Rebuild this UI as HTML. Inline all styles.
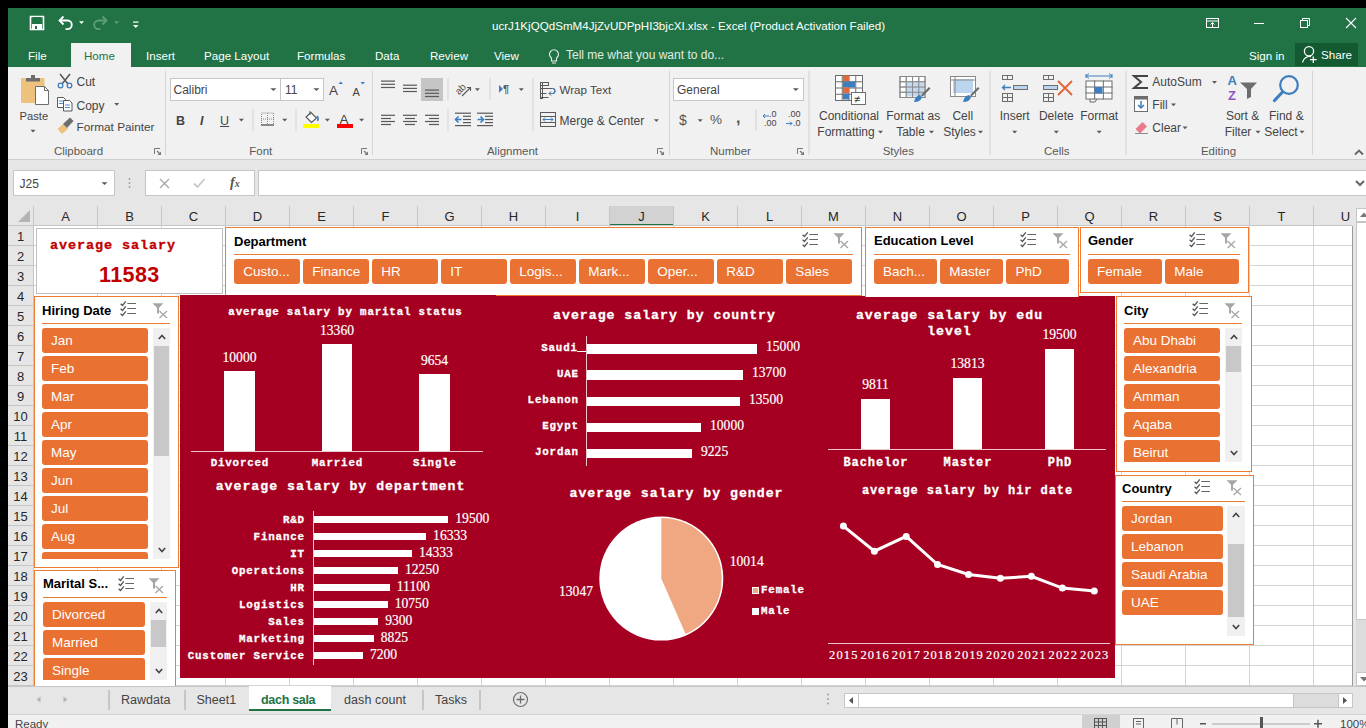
<!DOCTYPE html>
<html><head><meta charset="utf-8">
<style>
*{box-sizing:border-box;margin:0;padding:0}
html,body{width:1366px;height:728px;overflow:hidden;background:#000}
body{position:relative;font-family:"Liberation Sans",sans-serif;color:#262626}
.a{position:absolute}
.t{position:absolute;white-space:nowrap;line-height:1}
svg{position:absolute;overflow:visible}
#titlebar{left:8px;top:8px;width:1358px;height:59px;background:#217346}
#ribbon{left:8px;top:67px;width:1358px;height:93px;background:#f1f1f1;border-bottom:1px solid #cfcfcf}
#fbar{left:8px;top:160px;width:1358px;height:46px;background:#e6e6e6}
#colhdr{left:8px;top:206px;width:1358px;height:20px;background:#e6e6e6}
#rowhdr{left:8px;top:226px;width:25px;height:460px;background:#e6e6e6}
#grid{left:33px;top:226px;width:1320px;height:460px;background-color:#fff;
 background-image:linear-gradient(to right,#d4d4d4 1px,transparent 1px),linear-gradient(to bottom,transparent 19px,#d4d4d4 19px);
 background-size:64px 20px;background-position:0 0,0 0}
#tabbar{left:8px;top:686px;width:1358px;height:28px;background:#e6e6e6;border-top:1px solid #c6c6c6}
#status{left:8px;top:714px;width:1358px;height:14px;background:#f1f1f1;border-top:1px solid #d4d4d4}
.tab{position:absolute;top:43px;height:24px;line-height:25px;color:#fff;font-size:11.6px;white-space:nowrap}
.rt{position:absolute;white-space:nowrap;line-height:1;font-size:10.5px;color:#262626;letter-spacing:-0.15px}
.gl{position:absolute;top:144px;white-space:nowrap;line-height:1;font-size:10.5px;color:#595959;letter-spacing:-0.1px}
.sep{position:absolute;width:1px;background:#dadada}
.ch{position:absolute;top:206px;height:20px;font-size:13px;color:#262626;text-align:center;line-height:22px;border-right:1px solid #c6c6c6}
.rh{position:absolute;left:8px;width:25px;height:20px;font-size:13px;color:#262626;text-align:center;line-height:22px;border-bottom:1px solid #c6c6c6}
.dash{left:180px;top:296px;width:935px;height:382px;background:#a50021}
.mono{position:absolute;white-space:nowrap;line-height:1;font-family:"Liberation Mono",monospace;font-weight:bold;color:#fff;-webkit-text-stroke:0.3px #fff}
.serif{position:absolute;white-space:nowrap;line-height:1;font-family:"Liberation Serif",serif;color:#fff;-webkit-text-stroke:0.2px #fff}
.bar{position:absolute;background:#fff}
.slicer{position:absolute;background:#fff;border:1px solid #ed7d31}
.stitle{position:absolute;font-weight:bold;color:#000;white-space:nowrap;line-height:1}
.sdiv{position:absolute;height:1px;background:#ed7d31}
.btn{position:absolute;background:#e97132;border-radius:3px;color:#fff;font-size:13.5px;line-height:26px;padding-left:9px;white-space:nowrap;overflow:hidden;height:24px}
.sb{position:absolute;background:#f0f0f0}
.thumb{position:absolute;background:#c8c8c8}

</style></head><body>

<!-- chrome -->
<div id="titlebar" class="a"></div>
<div id="ribbon" class="a"></div>
<div id="fbar" class="a"></div>
<div id="colhdr" class="a"></div>
<div id="rowhdr" class="a"></div>
<div id="grid" class="a"></div>
<!-- title text -->
<div class="t" style="left:492px;top:20px;font-size:11.6px;color:#fff;letter-spacing:0px">ucrJ1KjQQdSmM4JjZvUDPpHI3bjcXI.xlsx - Excel (Product Activation Failed)</div>
<!-- tabs -->
<div class="a" style="left:71px;top:43px;width:60px;height:24px;background:#f1f1f1"></div>
<div class="tab" style="left:28px">File</div>
<div class="tab" style="left:84px;color:#217346">Home</div>
<div class="tab" style="left:146px">Insert</div>
<div class="tab" style="left:204px">Page Layout</div>
<div class="tab" style="left:297px">Formulas</div>
<div class="tab" style="left:375px">Data</div>
<div class="tab" style="left:430px">Review</div>
<div class="tab" style="left:494px">View</div>
<div class="tab" style="left:566px;color:#e0ece4;font-size:12px">Tell me what you want to do...</div>
<div class="tab" style="left:1249px">Sign in</div>
<div class="a" style="left:1295px;top:43px;width:63px;height:23px;background:#135a32"></div>
<div class="tab" style="left:1321px;top:42px">Share</div>

<!-- ribbon -->
<div class="t" style="left:19.5px;top:110.5px;font-size:11.2px;color:#444;">Paste</div>
<div class="t" style="left:76.5px;top:76px;font-size:12px;color:#444;">Cut</div>
<div class="t" style="left:76.5px;top:99.5px;font-size:12px;color:#444;">Copy</div>
<div class="t" style="left:76.5px;top:121.5px;font-size:11.8px;color:#444;">Format Painter</div>
<div class="t" style="left:-21.5px;width:200px;text-align:center;top:145.5px;font-size:11.5px;color:#595959;">Clipboard</div>
<div class="a" style="left:170px;top:78px;width:111px;height:23px;background:#fff;border:1px solid #c6c6c6"></div>
<div class="a" style="left:280px;top:78px;width:44px;height:23px;background:#fff;border:1px solid #c6c6c6"></div>
<div class="t" style="left:173.5px;top:83.5px;font-size:12px;color:#444;">Calibri</div>
<div class="t" style="left:285px;top:83.5px;font-size:12px;color:#444;">11</div>
<div class="t" style="left:329px;top:83.5px;font-size:13.5px;color:#444;">A</div>
<div class="t" style="left:352.5px;top:86.5px;font-size:11px;color:#444;">A</div>
<div class="t" style="left:176px;top:114.5px;font-size:12.5px;color:#444;font-weight:bold">B</div>
<div class="t" style="left:200px;top:114.5px;font-size:12.5px;color:#444;font-style:italic;font-weight:bold">I</div>
<div class="t" style="left:220px;top:114.5px;font-size:12.5px;color:#444;text-decoration:underline">U</div>
<div class="t" style="left:339.5px;top:112.5px;font-size:13.5px;color:#444;">A</div>
<div class="t" style="left:160.8px;width:200px;text-align:center;top:145.5px;font-size:11.5px;color:#595959;">Font</div>
<div class="t" style="left:503px;top:83.5px;font-size:11px;color:#595959;font-weight:bold">¶</div>
<div class="t" style="left:559.5px;top:84px;font-size:11.6px;color:#444;">Wrap Text</div>
<div class="t" style="left:559.5px;top:114.5px;font-size:12px;color:#444;">Merge &amp; Center</div>
<div class="t" style="left:412.5px;width:200px;text-align:center;top:145.5px;font-size:11.5px;color:#595959;">Alignment</div>
<div class="a" style="left:673px;top:78px;width:131px;height:23px;background:#fff;border:1px solid #c6c6c6"></div>
<div class="t" style="left:677px;top:83.5px;font-size:12px;color:#444;">General</div>
<div class="t" style="left:679px;top:113px;font-size:14px;color:#555;">$</div>
<div class="t" style="left:710px;top:113px;font-size:13.5px;color:#555;">%</div>
<div class="t" style="left:736px;top:110px;font-size:16px;color:#555;font-weight:bold">,</div>
<div class="t" style="left:769px;top:110px;font-size:9px;color:#444;">.0</div>
<div class="t" style="left:764px;top:119px;font-size:9px;color:#444;">.00</div>
<div class="t" style="left:788px;top:110px;font-size:9px;color:#444;">.00</div>
<div class="t" style="left:793px;top:119px;font-size:9px;color:#444;">.0</div>
<div class="t" style="left:630.5px;width:200px;text-align:center;top:145.5px;font-size:11.5px;color:#595959;">Number</div>
<div class="t" style="left:749px;width:200px;text-align:center;top:110px;font-size:12px;color:#444;">Conditional</div>
<div class="t" style="left:746px;width:200px;text-align:center;top:126px;font-size:12px;color:#444;">Formatting</div>
<div class="t" style="left:813.2px;width:200px;text-align:center;top:110px;font-size:12px;color:#444;">Format as</div>
<div class="t" style="left:810.5px;width:200px;text-align:center;top:126px;font-size:12px;color:#444;">Table</div>
<div class="t" style="left:862.8px;width:200px;text-align:center;top:110px;font-size:12px;color:#444;">Cell</div>
<div class="t" style="left:859.5px;width:200px;text-align:center;top:126px;font-size:12px;color:#444;">Styles</div>
<div class="t" style="left:798.3px;width:200px;text-align:center;top:145.5px;font-size:11.5px;color:#595959;">Styles</div>
<div class="t" style="left:914.7px;width:200px;text-align:center;top:110px;font-size:12px;color:#444;">Insert</div>
<div class="t" style="left:956.3px;width:200px;text-align:center;top:110px;font-size:12px;color:#444;">Delete</div>
<div class="t" style="left:999.2px;width:200px;text-align:center;top:110px;font-size:12px;color:#444;">Format</div>
<div class="t" style="left:956.8px;width:200px;text-align:center;top:145.5px;font-size:11.5px;color:#595959;">Cells</div>
<div class="t" style="left:1152.3px;top:76px;font-size:12px;color:#444;">AutoSum</div>
<div class="t" style="left:1152.3px;top:99px;font-size:12px;color:#444;">Fill</div>
<div class="t" style="left:1152.3px;top:122px;font-size:12px;color:#444;">Clear</div>
<div class="t" style="left:1227.5px;top:74px;font-size:13px;color:#3d7ebf;font-weight:bold">A</div>
<div class="t" style="left:1228px;top:88.5px;font-size:13px;color:#8e56c4;font-weight:bold">Z</div>
<div class="t" style="left:1142.6px;width:200px;text-align:center;top:110px;font-size:12px;color:#444;">Sort &amp;</div>
<div class="t" style="left:1138px;width:200px;text-align:center;top:126px;font-size:12px;color:#444;">Filter</div>
<div class="t" style="left:1186.3px;width:200px;text-align:center;top:110px;font-size:12px;color:#444;">Find &amp;</div>
<div class="t" style="left:1181px;width:200px;text-align:center;top:126px;font-size:12px;color:#444;">Select</div>
<div class="t" style="left:1118.5px;width:200px;text-align:center;top:145.5px;font-size:11.5px;color:#595959;">Editing</div>
<div class="a" style="left:13px;top:170px;width:102px;height:26px;background:#fff;border:1px solid #c6c6c6"></div>
<div class="t" style="left:19.5px;top:178px;font-size:12px;color:#444;">J25</div>
<div class="a" style="left:145px;top:170px;width:110px;height:26px;background:#fff;border:1px solid #c6c6c6"></div>
<div class="t" style="left:230px;top:176px;font-size:14px;color:#555;font-family:'Liberation Serif';font-weight:bold"><i>f</i><span style="font-size:10px"><i>x</i></span></div>
<div class="a" style="left:258px;top:170px;width:1108px;height:26px;background:#fff;border:1px solid #c6c6c6;border-right:none"></div>
<svg style="left:0;top:0" width="1366" height="728"><path d="M30.5,16.5 h13 v13 h-13 z" fill="none" stroke="#fff" stroke-width="1.6"/><rect x="33" y="17" width="8" height="6" fill="#217346"/><rect x="32" y="24" width="10" height="5" fill="#fff"/><rect x="35" y="26" width="2" height="3" fill="#217346"/><path d="M60,20.5 h7.5 a4.3,4.3 0 0 1 0,8.6 h-2" fill="none" stroke="#fff" stroke-width="1.8"/><polyline points="63.5,16.5 59.5,20.5 63.5,24.5" fill="none" stroke="#fff" stroke-width="1.8"/><polygon points="79.0,21.2 84.0,21.2 81.5,24.0" fill="#fff"/><path d="M106,20.5 h-7.5 a4.3,4.3 0 0 0 0,8.6 h2" fill="none" stroke="#5e9e7a" stroke-width="1.8"/><polyline points="102.5,16.5 106.5,20.5 102.5,24.5" fill="none" stroke="#5e9e7a" stroke-width="1.8"/><polygon points="114.0,21.2 119.0,21.2 116.5,24.0" fill="#5e9e7a"/><rect x="133" y="21.5" width="5.5" height="1.2" fill="#fff"/><polygon points="133,25 138.5,25 135.75,28" fill="#fff"/><rect x="1206.5" y="18.5" width="12" height="9" fill="none" stroke="#fff" stroke-width="1"/><line x1="1206" y1="21" x2="1219" y2="21" stroke="#fff"/><path d="M1212.5,27 v-4.5 M1210.5,24.5 l2,-2 l2,2" fill="none" stroke="#fff" stroke-width="1"/><rect x="1254" y="23" width="10" height="1" fill="#fff"/><rect x="1300.5" y="20.5" width="7" height="7" fill="none" stroke="#fff" stroke-width="1"/><path d="M1302.5,20.5 v-2 h7 v7 h-2" fill="none" stroke="#fff" stroke-width="1"/><path d="M1346,18 L1356,28 M1356,18 L1346,28" stroke="#fff" stroke-width="1.1"/><circle cx="1309" cy="51.2" r="4.6" fill="none" stroke="#fff" stroke-width="1.3"/><path d="M1302.5,62.5 a7.5,7.5 0 0 1 8.5,-6" fill="none" stroke="#fff" stroke-width="1.3"/><path d="M1313.3,56.5 v6.5 M1310,59.7 h6.7" stroke="#fff" stroke-width="1.3"/><path d="M551.5,58 a4.5,4.5 0 1 1 5,0 v3 h-5 z" fill="none" stroke="#e8f0ea" stroke-width="1.1"/><line x1="552" y1="63" x2="556" y2="63" stroke="#e8f0ea" stroke-width="1"/><rect x="21" y="78" width="23.5" height="25" rx="1" fill="#ecc27c"/><rect x="26" y="78" width="14" height="3.5" fill="#6d6d6d"/><rect x="31" y="75" width="4" height="4" fill="#6d6d6d"/><path d="M35.5,86.5 h9 l4,4 v14 h-13 z" fill="#fff" stroke="#6d6d6d" stroke-width="1"/><path d="M44.5,86.5 v4 h4" fill="none" stroke="#6d6d6d" stroke-width="1"/><polygon points="30.5,129.7 35.5,129.7 33,132.5" fill="#595959"/><path d="M60,74 L68,84 M70,74 L62,84" stroke="#555" stroke-width="1.5"/><circle cx="60.5" cy="85.5" r="2.3" fill="none" stroke="#3d7ebf" stroke-width="1.3"/><circle cx="69.5" cy="85.5" r="2.3" fill="none" stroke="#3d7ebf" stroke-width="1.3"/><path d="M57.5,97.5 h6 l2,2 v8 h-8 z" fill="#fff" stroke="#595959" stroke-width="1"/><path d="M63.5,100.5 h6 l2.5,2.5 v8 h-8.5 z" fill="#fff" stroke="#595959" stroke-width="1"/><path d="M59,101 h4 M59,103.5 h4 M65,105 h5 M65,107.5 h5" stroke="#3d7ebf" stroke-width="0.9"/><polygon points="114.2,102.9 119.2,102.9 116.7,105.7" fill="#595959"/><polygon points="57.5,129 63,124 68,129 62,134" fill="#ecc27c"/><polygon points="63,124 70,117.5 73.5,121 67,128" fill="#6d6d6d"/><path d="M154.5,154 V148.5 H160" fill="none" stroke="#777" stroke-width="1"/><path d="M157,151 L159.5,153.5" stroke="#777" stroke-width="1.2"/><polygon points="161,151.5 161,155 157.5,155" fill="#777"/><rect x="165" y="71" width="1" height="84" fill="#d4d4d4"/><polygon points="270.4,88.3 276.4,88.3 273.4,91.1" fill="#595959"/><polygon points="313.4,88.3 319.4,88.3 316.4,91.1" fill="#595959"/><polygon points="338.5,84 343,84 340.75,81.5" fill="#3d7ebf"/><polygon points="360.5,82 365,82 362.75,84.5" fill="#3d7ebf"/><polygon points="238.9,118.7 243.9,118.7 241.4,121.5" fill="#595959"/><rect x="252.5" y="109" width="1" height="22" fill="#d4d4d4"/><rect x="261.5" y="113" width="12" height="12" fill="none" stroke="#8a8a8a" stroke-width="1" stroke-dasharray="1,1"/><line x1="267.5" y1="113" x2="267.5" y2="125" stroke="#8a8a8a" stroke-dasharray="1,1"/><line x1="261" y1="119" x2="274" y2="119" stroke="#8a8a8a" stroke-dasharray="1,1"/><line x1="261" y1="125" x2="274" y2="125" stroke="#555" stroke-width="1.2"/><polygon points="282.2,118.7 287.2,118.7 284.7,121.5" fill="#595959"/><rect x="295.5" y="109" width="1" height="22" fill="#d4d4d4"/><path d="M306,117 l5,-4.5 l5.5,5.5 l-5,4.5 z" fill="#fff" stroke="#555" stroke-width="1.1"/><path d="M310,111 v4" stroke="#555" stroke-width="1"/><path d="M317,116 q2,2 0.5,5" fill="none" stroke="#3d7ebf" stroke-width="1.6"/><rect x="303" y="124" width="16" height="4" fill="#ffff00"/><polygon points="324.9,118.7 329.9,118.7 327.4,121.5" fill="#595959"/><rect x="337" y="124" width="16" height="4" fill="#ff0000"/><polygon points="359.1,118.7 364.1,118.7 361.6,121.5" fill="#595959"/><path d="M361.5,154 V148.5 H367" fill="none" stroke="#777" stroke-width="1"/><path d="M364,151 L366.5,153.5" stroke="#777" stroke-width="1.2"/><polygon points="368,151.5 368,155 364.5,155" fill="#777"/><rect x="372" y="71" width="1" height="84" fill="#d4d4d4"/><rect x="381" y="80.5" width="14" height="1.2" fill="#595959"/><rect x="381" y="83.7" width="14" height="1.2" fill="#595959"/><rect x="381" y="86.9" width="14" height="1.2" fill="#595959"/><rect x="403" y="84.60000000000001" width="14" height="1.2" fill="#595959"/><rect x="403" y="87.80000000000001" width="14" height="1.2" fill="#595959"/><rect x="403" y="90.9" width="14" height="1.2" fill="#595959"/><rect x="421" y="78" width="22" height="23" fill="#c5c5c5"/><rect x="425" y="89.5" width="14" height="1.2" fill="#595959"/><rect x="425" y="92.7" width="14" height="1.2" fill="#595959"/><rect x="425" y="95.9" width="14" height="1.2" fill="#595959"/><rect x="447.5" y="78" width="1" height="22" fill="#d4d4d4"/><text x="455" y="92" font-family="Liberation Sans" font-size="10" fill="#555" transform="rotate(-45 461 89)">ab</text><path d="M462,96 L470.5,87.5 M467,87.5 h3.5 v3.5" fill="none" stroke="#555" stroke-width="1.1"/><polygon points="474.9,88.2 479.9,88.2 477.4,91.0" fill="#595959"/><rect x="489.5" y="78" width="1" height="22" fill="#d4d4d4"/><polygon points="499,85 503,88.9 499,92.8" fill="#3d7ebf"/><polygon points="518.8,88.2 523.8,88.2 521.3,91.0" fill="#595959"/><rect x="381" y="114.7" width="14" height="1.2" fill="#595959"/><rect x="381" y="117.9" width="10" height="1.2" fill="#595959"/><rect x="381" y="120.9" width="14" height="1.2" fill="#595959"/><rect x="381" y="123.9" width="10" height="1.2" fill="#595959"/><rect x="403" y="114.7" width="14" height="1.2" fill="#595959"/><rect x="405" y="117.9" width="10" height="1.2" fill="#595959"/><rect x="403" y="120.9" width="14" height="1.2" fill="#595959"/><rect x="405" y="123.9" width="10" height="1.2" fill="#595959"/><rect x="425" y="114.7" width="14" height="1.2" fill="#595959"/><rect x="429" y="117.9" width="10" height="1.2" fill="#595959"/><rect x="425" y="120.9" width="14" height="1.2" fill="#595959"/><rect x="429" y="123.9" width="10" height="1.2" fill="#595959"/><rect x="447.5" y="109" width="1" height="22" fill="#d4d4d4"/><rect x="455" y="112.60000000000001" width="16" height="1.2" fill="#595959"/><rect x="463" y="115.7" width="8" height="1.2" fill="#595959"/><rect x="463" y="118.9" width="8" height="1.2" fill="#595959"/><rect x="463" y="122.0" width="8" height="1.2" fill="#595959"/><rect x="455" y="125.0" width="16" height="1.2" fill="#595959"/><path d="M455.5,119.5 h6 M458.5,116.5 l-3,3 l3,3" fill="none" stroke="#3d7ebf" stroke-width="1.6"/><rect x="477" y="112.60000000000001" width="16" height="1.2" fill="#595959"/><rect x="485" y="115.7" width="8" height="1.2" fill="#595959"/><rect x="485" y="118.9" width="8" height="1.2" fill="#595959"/><rect x="485" y="122.0" width="8" height="1.2" fill="#595959"/><rect x="477" y="125.0" width="16" height="1.2" fill="#595959"/><path d="M477.5,119.5 h6 M480.5,116.5 l3,3 l-3,3" fill="none" stroke="#3d7ebf" stroke-width="1.6"/><rect x="532.5" y="78" width="1" height="53" fill="#d4d4d4"/><rect x="540.5" y="82.5" width="8" height="3" fill="none" stroke="#595959" stroke-width="1"/><path d="M540.5,88.5 h12 a2.5,2.5 0 0 1 0,5 h-3 M551,91.5 l-2,2 l2,2 M540.5,93.5 h6 M540.5,97.5 h8" fill="none" stroke="#595959" stroke-width="1"/><path d="M552.5,88.5 a2.5,2.5 0 0 1 0,5 h-3" fill="none" stroke="#3d7ebf" stroke-width="1.2"/><rect x="540.5" y="82.5" width="2" height="16" fill="none" stroke="#595959" stroke-width="1"/><rect x="540.5" y="112.5" width="15" height="14" fill="none" stroke="#595959" stroke-width="1"/><line x1="540" y1="116.5" x2="556" y2="116.5" stroke="#595959"/><line x1="540" y1="122.5" x2="556" y2="122.5" stroke="#595959"/><path d="M543,119.5 h10 M545,117.5 l-2,2 l2,2 M551,117.5 l2,2 l-2,2" fill="none" stroke="#3d7ebf" stroke-width="1"/><polygon points="653.9,119.2 658.9,119.2 656.4,122.0" fill="#595959"/><path d="M657.5,154 V148.5 H663" fill="none" stroke="#777" stroke-width="1"/><path d="M660,151 L662.5,153.5" stroke="#777" stroke-width="1.2"/><polygon points="664,151.5 664,155 660.5,155" fill="#777"/><rect x="669" y="71" width="1" height="84" fill="#d4d4d4"/><polygon points="792.8,88.2 798.8,88.2 795.8,91.0" fill="#595959"/><polygon points="697.7,119.2 702.7,119.2 700.2,122.0" fill="#595959"/><rect x="755.5" y="109" width="1" height="22" fill="#d4d4d4"/><path d="M763,116 h6 M765,114 l-2,2 l2,2" fill="none" stroke="#3d7ebf" stroke-width="1"/><path d="M786,123.5 h6 M790,121.5 l2,2 l-2,2" fill="none" stroke="#3d7ebf" stroke-width="1"/><path d="M797.5,154 V148.5 H803" fill="none" stroke="#777" stroke-width="1"/><path d="M800,151 L802.5,153.5" stroke="#777" stroke-width="1.2"/><polygon points="804,151.5 804,155 800.5,155" fill="#777"/><rect x="808.5" y="71" width="1" height="84" fill="#d4d4d4"/><rect x="835.5" y="75.5" width="27" height="25" fill="#fff" stroke="#6d6d6d" stroke-width="1"/><line x1="842.25" y1="75" x2="842.25" y2="101" stroke="#6d6d6d" stroke-width="1"/><line x1="849.0" y1="75" x2="849.0" y2="101" stroke="#6d6d6d" stroke-width="1"/><line x1="855.75" y1="75" x2="855.75" y2="101" stroke="#6d6d6d" stroke-width="1"/><line x1="835" y1="81.75" x2="863" y2="81.75" stroke="#6d6d6d" stroke-width="1"/><line x1="835" y1="88.0" x2="863" y2="88.0" stroke="#6d6d6d" stroke-width="1"/><line x1="835" y1="94.25" x2="863" y2="94.25" stroke="#6d6d6d" stroke-width="1"/><rect x="843" y="75.5" width="6" height="6" fill="#e0683a"/><rect x="843" y="81.5" width="12" height="6" fill="#3d7ebf"/><rect x="843" y="87.5" width="6" height="6" fill="#e0683a"/><rect x="843" y="93.5" width="6" height="6" fill="#3d7ebf"/><rect x="851.5" y="92.5" width="14" height="12" fill="#fff" stroke="#6d6d6d"/><text x="854" y="103" font-family="Liberation Sans" font-size="11" fill="#333">≠</text><polygon points="878.0,130.7 883.0,130.7 880.5,133.5" fill="#595959"/><rect x="900.0" y="76.5" width="25" height="21" fill="#fff" stroke="#8a8a8a" stroke-width="1"/><line x1="906.25" y1="76" x2="906.25" y2="98" stroke="#8a8a8a" stroke-width="1"/><line x1="912.5" y1="76" x2="912.5" y2="98" stroke="#8a8a8a" stroke-width="1"/><line x1="918.75" y1="76" x2="918.75" y2="98" stroke="#8a8a8a" stroke-width="1"/><line x1="899.5" y1="81.75" x2="925.5" y2="81.75" stroke="#8a8a8a" stroke-width="1"/><line x1="899.5" y1="87.0" x2="925.5" y2="87.0" stroke="#8a8a8a" stroke-width="1"/><line x1="899.5" y1="92.25" x2="925.5" y2="92.25" stroke="#8a8a8a" stroke-width="1"/><rect x="906" y="81.5" width="18" height="15" fill="#bcd5ee" opacity="0.9"/><rect x="900.0" y="76.5" width="25" height="21" fill="none" stroke="#8a8a8a" stroke-width="1"/><line x1="906.25" y1="76" x2="906.25" y2="98" stroke="#8a8a8a" stroke-width="1"/><line x1="912.5" y1="76" x2="912.5" y2="98" stroke="#8a8a8a" stroke-width="1"/><line x1="918.75" y1="76" x2="918.75" y2="98" stroke="#8a8a8a" stroke-width="1"/><line x1="899.5" y1="81.75" x2="925.5" y2="81.75" stroke="#8a8a8a" stroke-width="1"/><line x1="899.5" y1="87.0" x2="925.5" y2="87.0" stroke="#8a8a8a" stroke-width="1"/><line x1="899.5" y1="92.25" x2="925.5" y2="92.25" stroke="#8a8a8a" stroke-width="1"/><path d="M914,102 q1,-6 6,-7 l2,2 q-1,5 -8,5 z" fill="#3d7ebf"/><path d="M921,95 l8,-8 l1.5,1.5 l-8,8 z" fill="#6d6d6d"/><polygon points="929.0,130.7 934.0,130.7 931.5,133.5" fill="#595959"/><rect x="950.5" y="76.5" width="25" height="20" fill="#fff" stroke="#8a8a8a"/><rect x="953" y="79" width="20" height="14" fill="#bcd5ee"/><line x1="950" y1="80" x2="976" y2="80" stroke="#8a8a8a"/><line x1="955" y1="76" x2="955" y2="97" stroke="#8a8a8a"/><path d="M963,102 q1,-6 6,-7 l2,2 q-1,5 -8,5 z" fill="#3d7ebf"/><path d="M970,95 l8,-8 l1.5,1.5 l-8,8 z" fill="#6d6d6d"/><polygon points="978.0,130.7 983.0,130.7 980.5,133.5" fill="#595959"/><rect x="989.5" y="71" width="1" height="84" fill="#d4d4d4"/><rect x="1002.5" y="75.5" width="10" height="4" fill="none" stroke="#6d6d6d"/><line x1="1007.5" y1="75" x2="1007.5" y2="80" stroke="#6d6d6d"/><rect x="1013.5" y="85.5" width="14" height="4" fill="#bcd5ee" stroke="#6d6d6d"/><path d="M1002,87.5 h9 M1005,85 l-2.5,2.5 l2.5,2.5" fill="none" stroke="#3d7ebf" stroke-width="1.3"/><rect x="1002.5" y="93.5" width="10" height="8" fill="none" stroke="#6d6d6d"/><line x1="1002" y1="97.5" x2="1013" y2="97.5" stroke="#6d6d6d"/><line x1="1007.5" y1="93" x2="1007.5" y2="102" stroke="#6d6d6d"/><polygon points="1012.2,130.7 1017.2,130.7 1014.7,133.5" fill="#595959"/><rect x="1043.5" y="75.5" width="10" height="4" fill="none" stroke="#6d6d6d"/><line x1="1048.5" y1="75" x2="1048.5" y2="80" stroke="#6d6d6d"/><rect x="1043.5" y="85.5" width="14" height="4" fill="#bcd5ee" stroke="#6d6d6d"/><rect x="1043.5" y="93.5" width="10" height="8" fill="none" stroke="#6d6d6d"/><line x1="1043" y1="97.5" x2="1054" y2="97.5" stroke="#6d6d6d"/><line x1="1048.5" y1="93" x2="1048.5" y2="102" stroke="#6d6d6d"/><path d="M1058,81 L1072,95 M1072,81 L1058,95" stroke="#e0683a" stroke-width="2"/><polygon points="1053.8,130.7 1058.8,130.7 1056.3,133.5" fill="#595959"/><path d="M1086,76 h26 M1086,74 v4 M1112,74 v4 M1089,73.5 l-3,2.5 l3,2.5 M1109,73.5 l3,2.5 l-3,2.5" fill="none" stroke="#3d7ebf" stroke-width="1"/><rect x="1086.0" y="81.0" width="26" height="18" fill="#fff" stroke="#6d6d6d" stroke-width="1"/><line x1="1094.6666666666667" y1="80.5" x2="1094.6666666666667" y2="99.5" stroke="#6d6d6d" stroke-width="1"/><line x1="1103.3333333333333" y1="80.5" x2="1103.3333333333333" y2="99.5" stroke="#6d6d6d" stroke-width="1"/><line x1="1085.5" y1="87.0" x2="1112.5" y2="87.0" stroke="#6d6d6d" stroke-width="1"/><line x1="1085.5" y1="93.0" x2="1112.5" y2="93.0" stroke="#6d6d6d" stroke-width="1"/><rect x="1094.5" y="87" width="8" height="6.5" fill="#3d7ebf"/><path d="M1090,99 v3 h5 l2,-3" fill="none" stroke="#6d6d6d"/><polygon points="1096.7,130.7 1101.7,130.7 1099.2,133.5" fill="#595959"/><rect x="1125.5" y="71" width="1" height="84" fill="#d4d4d4"/><path d="M1148,76 h-14 l7,6 l-7,6 h14" fill="none" stroke="#444" stroke-width="2"/><polygon points="1212.0,80.9 1217.0,80.9 1214.5,83.7" fill="#595959"/><rect x="1134.5" y="96.5" width="13" height="15" fill="#fff" stroke="#6d6d6d"/><rect x="1134.5" y="96.5" width="13" height="3" fill="#6d6d6d"/><path d="M1141,101 v7 M1138,105 l3,3 l3,-3" fill="none" stroke="#3d7ebf" stroke-width="1.5"/><polygon points="1171.0,103.5 1176.0,103.5 1173.5,106.3" fill="#595959"/><path d="M1135.5,129 l7,-7 l4.5,4.5 l-7,7 z" fill="#e87a8c"/><path d="M1135,133.5 h13" stroke="#8a8a8a" stroke-width="1"/><polygon points="1182.5,126.5 1187.5,126.5 1185,129.3" fill="#595959"/><polygon points="1240,82.5 1257,82.5 1251,89 1251,97 1247,99 1247,89" fill="#6d6d6d"/><polygon points="1255.5,130.7 1260.5,130.7 1258,133.5" fill="#595959"/><circle cx="1289" cy="85" r="8.8" fill="none" stroke="#3d7ebf" stroke-width="2.2"/><path d="M1282.5,92 L1274.5,100.5" stroke="#3d7ebf" stroke-width="3.2" stroke-linecap="round"/><polygon points="1299.5,130.7 1304.5,130.7 1302,133.5" fill="#595959"/><rect x="1312" y="71" width="1" height="84" fill="#d4d4d4"/><polyline points="1355,154.5 1359,150.5 1363,154.5" fill="none" stroke="#666" stroke-width="1.8"/><polygon points="101.5,182.2 107.5,182.2 104.5,185.0" fill="#595959"/><circle cx="129.5" cy="179" r="0.9" fill="#9a9a9a"/><circle cx="129.5" cy="183" r="0.9" fill="#9a9a9a"/><circle cx="129.5" cy="187" r="0.9" fill="#9a9a9a"/><path d="M160,179 l9,9 M169,179 l-9,9" stroke="#a6a6a6" stroke-width="1.3"/><path d="M194,183.5 l3.5,3.5 l7,-8" fill="none" stroke="#c8c8c8" stroke-width="1.8"/><polyline points="1356,181 1360,185 1364,181" fill="none" stroke="#666" stroke-width="2"/></svg>
<!-- sheet -->
<div class="ch" style="left:34px;width:64px;">A</div>
<div class="ch" style="left:98px;width:64px;">B</div>
<div class="ch" style="left:162px;width:64px;">C</div>
<div class="ch" style="left:226px;width:64px;">D</div>
<div class="ch" style="left:290px;width:64px;">E</div>
<div class="ch" style="left:354px;width:64px;">F</div>
<div class="ch" style="left:418px;width:64px;">G</div>
<div class="ch" style="left:482px;width:64px;">H</div>
<div class="ch" style="left:546px;width:64px;">I</div>
<div class="ch" style="left:610px;width:64px;background:#d2d2d2;">J</div>
<div class="ch" style="left:674px;width:64px;">K</div>
<div class="ch" style="left:738px;width:64px;">L</div>
<div class="ch" style="left:802px;width:64px;">M</div>
<div class="ch" style="left:866px;width:64px;">N</div>
<div class="ch" style="left:930px;width:64px;">O</div>
<div class="ch" style="left:994px;width:64px;">P</div>
<div class="ch" style="left:1058px;width:64px;">Q</div>
<div class="ch" style="left:1122px;width:64px;">R</div>
<div class="ch" style="left:1186px;width:64px;">S</div>
<div class="ch" style="left:1250px;width:64px;">T</div>
<div class="ch" style="left:1314px;width:64px;">U</div>
<div class="a" style="left:610px;top:224px;width:63px;height:2px;background:#217346"></div>
<div class="a" style="left:8px;top:225px;width:1345px;height:1px;background:#c6c6c6"></div>
<svg style="left:0;top:0" width="1366" height="728"><polygon points="30,210 30,222 18,222" fill="#b4b4b4"/></svg>
<div class="rh" style="top:226px">1</div>
<div class="rh" style="top:246px">2</div>
<div class="rh" style="top:266px">3</div>
<div class="rh" style="top:286px">4</div>
<div class="rh" style="top:306px">5</div>
<div class="rh" style="top:326px">6</div>
<div class="rh" style="top:346px">7</div>
<div class="rh" style="top:366px">8</div>
<div class="rh" style="top:386px">9</div>
<div class="rh" style="top:406px">10</div>
<div class="rh" style="top:426px">11</div>
<div class="rh" style="top:446px">12</div>
<div class="rh" style="top:466px">13</div>
<div class="rh" style="top:486px">14</div>
<div class="rh" style="top:506px">15</div>
<div class="rh" style="top:526px">16</div>
<div class="rh" style="top:546px">17</div>
<div class="rh" style="top:566px">18</div>
<div class="rh" style="top:586px">19</div>
<div class="rh" style="top:606px">20</div>
<div class="rh" style="top:626px">21</div>
<div class="rh" style="top:646px">22</div>
<div class="rh" style="top:666px">23</div>
<div class="a" style="left:33px;top:206px;width:1px;height:480px;background:#c6c6c6"></div>
<div class="a" style="left:1352px;top:206px;width:14px;height:480px;background:#e6e6e6"></div>
<div class="a" style="left:1352px;top:226px;width:1px;height:460px;background:#9b9b9b"></div>
<div class="a" style="left:1356px;top:208px;width:10px;height:478px;background:#dcdcdc"></div>
<div class="a" style="left:1356px;top:208px;width:10px;height:14px;background:#fff;border:1px solid #c6c6c6;border-right:none"></div>
<div class="a" style="left:1356px;top:222px;width:10px;height:398px;background:#fff;border:1px solid #c6c6c6;border-right:none"></div>
<div class="a" style="left:1356px;top:672px;width:10px;height:14px;background:#fff;border:1px solid #c6c6c6;border-right:none"></div>
<svg style="left:0;top:0" width="1366" height="728"><polygon points="1360,217 1368,217 1364,212.5" fill="#777"/><polygon points="1360,677 1368,677 1364,681.5" fill="#777"/></svg>
<!-- charts -->
<div class="a dash"></div>
<div class="mono" style="left:-154.58px;width:1000px;text-align:center;top:306.92px;font-size:10.80px;letter-spacing:0.84px;">average salary by marital status</div>
<div class="a" style="left:191px;top:451px;width:292px;height:1px;background:#e8c8cc"></div>
<div class="bar" style="left:224.0px;top:371.0px;width:31.0px;height:80.0px"></div>
<div class="serif" style="left:-260.5px;width:1000px;text-align:center;top:351.33px;font-size:13.6px;">10000</div>
<div class="mono" style="left:-260.08px;width:1000px;text-align:center;top:457.92px;font-size:10.80px;letter-spacing:0.84px;">Divorced</div>
<div class="bar" style="left:322.0px;top:344.0px;width:30.0px;height:107.0px"></div>
<div class="serif" style="left:-163.0px;width:1000px;text-align:center;top:324.33px;font-size:13.6px;">13360</div>
<div class="mono" style="left:-162.58px;width:1000px;text-align:center;top:457.92px;font-size:10.80px;letter-spacing:0.84px;">Married</div>
<div class="bar" style="left:419.0px;top:374.0px;width:31.0px;height:77.0px"></div>
<div class="serif" style="left:-65.5px;width:1000px;text-align:center;top:354.33px;font-size:13.6px;">9654</div>
<div class="mono" style="left:-65.08px;width:1000px;text-align:center;top:457.92px;font-size:10.80px;letter-spacing:0.84px;">Single</div>
<div class="mono" style="left:164.50px;width:1000px;text-align:center;top:309.42px;font-size:13.20px;letter-spacing:1.00px;">average salary by country</div>
<div class="a" style="left:586px;top:336px;width:1px;height:130px;background:#e8c8cc"></div>
<div class="bar" style="left:587.0px;top:344.0px;width:170.0px;height:9.5px"></div>
<div class="serif" style="left:766px;top:340.33px;font-size:13.6px;">15000</div>
<div class="mono" style="left:-422.16px;width:1000px;text-align:right;top:342.92px;font-size:10.80px;letter-spacing:0.84px;">Saudi</div>
<div class="bar" style="left:587.0px;top:370.0px;width:156.0px;height:9.5px"></div>
<div class="serif" style="left:752px;top:366.33px;font-size:13.6px;">13700</div>
<div class="mono" style="left:-421.16px;width:1000px;text-align:right;top:368.92px;font-size:10.80px;letter-spacing:0.84px;">UAE</div>
<div class="bar" style="left:587.0px;top:396.5px;width:153.0px;height:9.5px"></div>
<div class="serif" style="left:749px;top:392.83px;font-size:13.6px;">13500</div>
<div class="mono" style="left:-421.16px;width:1000px;text-align:right;top:395.42px;font-size:10.80px;letter-spacing:0.84px;">Lebanon</div>
<div class="bar" style="left:587.0px;top:422.5px;width:114.0px;height:9.5px"></div>
<div class="serif" style="left:710px;top:418.83px;font-size:13.6px;">10000</div>
<div class="mono" style="left:-421.16px;width:1000px;text-align:right;top:421.42px;font-size:10.80px;letter-spacing:0.84px;">Egypt</div>
<div class="bar" style="left:587.0px;top:448.5px;width:105.0px;height:9.5px"></div>
<div class="serif" style="left:701px;top:444.83px;font-size:13.6px;">9225</div>
<div class="mono" style="left:-421.16px;width:1000px;text-align:right;top:447.42px;font-size:10.80px;letter-spacing:0.84px;">Jordan</div>
<div class="a" style="left:577px;top:351px;width:9px;height:1px;background:#fff"></div>
<div class="mono" style="left:449.50px;width:1000px;text-align:center;top:309.42px;font-size:13.20px;letter-spacing:1.00px;">average salary by edu</div>
<div class="mono" style="left:449.50px;width:1000px;text-align:center;top:325.42px;font-size:13.20px;letter-spacing:1.00px;">level</div>
<div class="a" style="left:828px;top:449px;width:278px;height:1px;background:#e8c8cc"></div>
<div class="bar" style="left:861.0px;top:399.0px;width:29.0px;height:50.0px"></div>
<div class="serif" style="left:375.5px;width:1000px;text-align:center;top:378.33px;font-size:13.6px;">9811</div>
<div class="mono" style="left:375.96px;width:1000px;text-align:center;top:457.02px;font-size:12.00px;letter-spacing:0.92px;">Bachelor</div>
<div class="bar" style="left:953.0px;top:378.0px;width:29.0px;height:71.0px"></div>
<div class="serif" style="left:467.5px;width:1000px;text-align:center;top:357.33px;font-size:13.6px;">13813</div>
<div class="mono" style="left:467.96px;width:1000px;text-align:center;top:457.02px;font-size:12.00px;letter-spacing:0.92px;">Master</div>
<div class="bar" style="left:1045.0px;top:349.0px;width:29.0px;height:100.0px"></div>
<div class="serif" style="left:559.5px;width:1000px;text-align:center;top:328.33px;font-size:13.6px;">19500</div>
<div class="mono" style="left:559.96px;width:1000px;text-align:center;top:457.02px;font-size:12.00px;letter-spacing:0.92px;">PhD</div>
<div class="mono" style="left:-159.50px;width:1000px;text-align:center;top:479.62px;font-size:13.20px;letter-spacing:1.00px;">average salary by department</div>
<div class="a" style="left:313px;top:511px;width:1px;height:154px;background:#e8c8cc"></div>
<div class="bar" style="left:314.0px;top:516.1px;width:134.3px;height:7.0px"></div>
<div class="serif" style="left:455.3px;top:511.93px;font-size:13.6px;">19500</div>
<div class="mono" style="left:-695.16px;width:1000px;text-align:right;top:514.52px;font-size:10.80px;letter-spacing:0.84px;">R&amp;D</div>
<div class="bar" style="left:314.0px;top:533.1px;width:112.1px;height:7.0px"></div>
<div class="serif" style="left:433.1px;top:528.9300000000001px;font-size:13.6px;">16333</div>
<div class="mono" style="left:-695.16px;width:1000px;text-align:right;top:531.52px;font-size:10.80px;letter-spacing:0.84px;">Finance</div>
<div class="bar" style="left:314.0px;top:550.1px;width:97.9px;height:7.0px"></div>
<div class="serif" style="left:418.9px;top:545.9300000000001px;font-size:13.6px;">14333</div>
<div class="mono" style="left:-695.16px;width:1000px;text-align:right;top:548.52px;font-size:10.80px;letter-spacing:0.84px;">IT</div>
<div class="bar" style="left:314.0px;top:567.1px;width:84.0px;height:7.0px"></div>
<div class="serif" style="left:405px;top:562.9300000000001px;font-size:13.6px;">12250</div>
<div class="mono" style="left:-695.16px;width:1000px;text-align:right;top:565.52px;font-size:10.80px;letter-spacing:0.84px;">Operations</div>
<div class="bar" style="left:314.0px;top:584.1px;width:75.8px;height:7.0px"></div>
<div class="serif" style="left:396.8px;top:579.9300000000001px;font-size:13.6px;">11100</div>
<div class="mono" style="left:-695.16px;width:1000px;text-align:right;top:582.52px;font-size:10.80px;letter-spacing:0.84px;">HR</div>
<div class="bar" style="left:314.0px;top:601.1px;width:73.7px;height:7.0px"></div>
<div class="serif" style="left:394.7px;top:596.9300000000001px;font-size:13.6px;">10750</div>
<div class="mono" style="left:-695.16px;width:1000px;text-align:right;top:599.52px;font-size:10.80px;letter-spacing:0.84px;">Logistics</div>
<div class="bar" style="left:314.0px;top:618.1px;width:64.2px;height:7.0px"></div>
<div class="serif" style="left:385.2px;top:613.9300000000001px;font-size:13.6px;">9300</div>
<div class="mono" style="left:-695.16px;width:1000px;text-align:right;top:616.52px;font-size:10.80px;letter-spacing:0.84px;">Sales</div>
<div class="bar" style="left:314.0px;top:635.1px;width:59.8px;height:7.0px"></div>
<div class="serif" style="left:380.8px;top:630.9300000000001px;font-size:13.6px;">8825</div>
<div class="mono" style="left:-695.16px;width:1000px;text-align:right;top:633.52px;font-size:10.80px;letter-spacing:0.84px;">Marketing</div>
<div class="bar" style="left:314.0px;top:652.1px;width:48.9px;height:7.0px"></div>
<div class="serif" style="left:369.9px;top:647.9300000000001px;font-size:13.6px;">7200</div>
<div class="mono" style="left:-695.16px;width:1000px;text-align:right;top:650.52px;font-size:10.80px;letter-spacing:0.84px;">Customer Service</div>
<div class="mono" style="left:176.50px;width:1000px;text-align:center;top:487.12px;font-size:13.20px;letter-spacing:1.00px;">average salary by gender</div>
<svg style="left:0;top:0" width="1366" height="728"><circle cx="661.3" cy="578.6" r="62" fill="#fff"/><path d="M661.3,578.6 L661.3,518.1 A60.5,60.5 0 0 1 685.59,634.01 Z" fill="#f0a882"/></svg>
<div class="serif" style="left:246.70000000000005px;width:1000px;text-align:center;top:555.33px;font-size:13.6px;">10014</div>
<div class="serif" style="left:76px;width:1000px;text-align:center;top:584.83px;font-size:13.6px;">13047</div>
<div class="a" style="left:752px;top:587px;width:7px;height:7px;background:#f0a882;border:1px solid #fff"></div>
<div class="a" style="left:752px;top:608px;width:7px;height:7px;background:#fff"></div>
<div class="mono" style="left:761px;top:584.92px;font-size:10.80px;letter-spacing:0.84px;">Female</div>
<div class="mono" style="left:761px;top:605.92px;font-size:10.80px;letter-spacing:0.84px;">Male</div>
<div class="mono" style="left:467.46px;width:1000px;text-align:center;top:484.52px;font-size:12.00px;letter-spacing:0.92px;">average salary by hir date</div>
<div class="a" style="left:828px;top:643px;width:282px;height:1px;background:#e8c8cc"></div>
<svg style="left:0;top:0" width="1366" height="728"><polyline points="843.4,526.1 874.4,551.2 906.2,536.4 937.5,564.5 968.5,574.5 1000.4,578.3 1031.4,576.3 1062.4,588.1 1094.3,591" fill="none" stroke="#fff" stroke-width="3"/><circle cx="843.4" cy="526.1" r="3.5" fill="#fff"/><circle cx="874.4" cy="551.2" r="3.5" fill="#fff"/><circle cx="906.2" cy="536.4" r="3.5" fill="#fff"/><circle cx="937.5" cy="564.5" r="3.5" fill="#fff"/><circle cx="968.5" cy="574.5" r="3.5" fill="#fff"/><circle cx="1000.4" cy="578.3" r="3.5" fill="#fff"/><circle cx="1031.4" cy="576.3" r="3.5" fill="#fff"/><circle cx="1062.4" cy="588.1" r="3.5" fill="#fff"/><circle cx="1094.3" cy="591" r="3.5" fill="#fff"/></svg>
<div class="serif" style="left:343.79999999999995px;width:1000px;text-align:center;top:649.3px;font-size:12.5px;letter-spacing:1.1px;-webkit-text-stroke:0.2px #fff">2015</div>
<div class="serif" style="left:375.15999999999997px;width:1000px;text-align:center;top:649.3px;font-size:12.5px;letter-spacing:1.1px;-webkit-text-stroke:0.2px #fff">2016</div>
<div class="serif" style="left:406.52px;width:1000px;text-align:center;top:649.3px;font-size:12.5px;letter-spacing:1.1px;-webkit-text-stroke:0.2px #fff">2017</div>
<div class="serif" style="left:437.88px;width:1000px;text-align:center;top:649.3px;font-size:12.5px;letter-spacing:1.1px;-webkit-text-stroke:0.2px #fff">2018</div>
<div class="serif" style="left:469.2399999999999px;width:1000px;text-align:center;top:649.3px;font-size:12.5px;letter-spacing:1.1px;-webkit-text-stroke:0.2px #fff">2019</div>
<div class="serif" style="left:500.6px;width:1000px;text-align:center;top:649.3px;font-size:12.5px;letter-spacing:1.1px;-webkit-text-stroke:0.2px #fff">2020</div>
<div class="serif" style="left:531.96px;width:1000px;text-align:center;top:649.3px;font-size:12.5px;letter-spacing:1.1px;-webkit-text-stroke:0.2px #fff">2021</div>
<div class="serif" style="left:563.3200000000002px;width:1000px;text-align:center;top:649.3px;font-size:12.5px;letter-spacing:1.1px;-webkit-text-stroke:0.2px #fff">2022</div>
<div class="serif" style="left:594.6800000000001px;width:1000px;text-align:center;top:649.3px;font-size:12.5px;letter-spacing:1.1px;-webkit-text-stroke:0.2px #fff">2023</div>
<!-- slicers -->
<div class="a" style="left:36px;top:228px;width:187px;height:66px;background:#fff;border:1px solid #c0c0c0"></div>
<div class="t" style="left:50px;top:239.15px;font-family:'Liberation Mono';font-weight:bold;font-size:13.5px;letter-spacing:0.9px;-webkit-text-stroke:0.3px #c00000;color:#c00000">average salary</div>
<div class="t" style="left:99px;top:264.5px;font-weight:bold;font-size:21.5px;letter-spacing:0.4px;color:#c00000">11583</div>
<div class="slicer" style="left:225px;top:227px;width:637px;height:69px;"></div>
<div class="stitle" style="left:234px;top:234.7px;font-size:13px">Department</div>
<div class="sdiv" style="left:234px;top:254px;width:619px"></div>
<svg style="left:802px;top:232px" width="17" height="16" viewBox="0 0 17 16"><polyline points="0.6,2.6999999999999997 2.5,4.5 5.8,0.3" fill="none" stroke="#555" stroke-width="1.25"/><line x1="7.3" y1="2.5" x2="16" y2="2.5" stroke="#666" stroke-width="1"/><polyline points="0.6,7.699999999999999 2.5,9.5 5.8,5.3" fill="none" stroke="#555" stroke-width="1.25"/><line x1="7.3" y1="7.5" x2="16" y2="7.5" stroke="#666" stroke-width="1"/><polyline points="0.6,12.700000000000001 2.5,14.5 5.8,10.3" fill="none" stroke="#555" stroke-width="1.25"/><line x1="7.3" y1="12.5" x2="16" y2="12.5" stroke="#666" stroke-width="1"/></svg>
<svg style="left:833px;top:232px" width="16" height="17" viewBox="0 0 16 17"><polygon points="0.5,1.2 11.5,1.2 7,5.8 7,11.5 5,11.5 5,5.8" fill="#a6a6a6"/><path d="M7.5,9 L15,16 M15,9 L7.5,16" stroke="#a6a6a6" stroke-width="1.3"/></svg>
<div class="btn" style="left:234.2px;top:259.0px;width:65.5px;height:25.0px">Custo...</div>
<div class="btn" style="left:303.2px;top:259.0px;width:65.5px;height:25.0px">Finance</div>
<div class="btn" style="left:372.2px;top:259.0px;width:65.5px;height:25.0px">HR</div>
<div class="btn" style="left:441.2px;top:259.0px;width:65.5px;height:25.0px">IT</div>
<div class="btn" style="left:510.2px;top:259.0px;width:65.5px;height:25.0px">Logis...</div>
<div class="btn" style="left:579.2px;top:259.0px;width:65.5px;height:25.0px">Mark...</div>
<div class="btn" style="left:648.2px;top:259.0px;width:65.5px;height:25.0px">Oper...</div>
<div class="btn" style="left:717.2px;top:259.0px;width:65.5px;height:25.0px">R&amp;D</div>
<div class="btn" style="left:786.2px;top:259.0px;width:65.5px;height:25.0px">Sales</div>
<div class="slicer" style="left:865px;top:227px;width:214px;height:70px;border-bottom:none"></div>
<div class="stitle" style="left:874px;top:234.3px;font-size:13px">Education Level</div>
<div class="sdiv" style="left:874px;top:254px;width:196px"></div>
<svg style="left:1020px;top:232px" width="17" height="16" viewBox="0 0 17 16"><polyline points="0.6,2.6999999999999997 2.5,4.5 5.8,0.3" fill="none" stroke="#555" stroke-width="1.25"/><line x1="7.3" y1="2.5" x2="16" y2="2.5" stroke="#666" stroke-width="1"/><polyline points="0.6,7.699999999999999 2.5,9.5 5.8,5.3" fill="none" stroke="#555" stroke-width="1.25"/><line x1="7.3" y1="7.5" x2="16" y2="7.5" stroke="#666" stroke-width="1"/><polyline points="0.6,12.700000000000001 2.5,14.5 5.8,10.3" fill="none" stroke="#555" stroke-width="1.25"/><line x1="7.3" y1="12.5" x2="16" y2="12.5" stroke="#666" stroke-width="1"/></svg>
<svg style="left:1052px;top:232px" width="16" height="17" viewBox="0 0 16 17"><polygon points="0.5,1.2 11.5,1.2 7,5.8 7,11.5 5,11.5 5,5.8" fill="#a6a6a6"/><path d="M7.5,9 L15,16 M15,9 L7.5,16" stroke="#a6a6a6" stroke-width="1.3"/></svg>
<div class="btn" style="left:874.0px;top:259.0px;width:62.5px;height:25.0px">Bach...</div>
<div class="btn" style="left:940.2px;top:259.0px;width:62.5px;height:25.0px">Master</div>
<div class="btn" style="left:1006.4px;top:259.0px;width:62.5px;height:25.0px">PhD</div>
<div class="slicer" style="left:1080px;top:227px;width:169px;height:66px;"></div>
<div class="stitle" style="left:1088px;top:234.3px;font-size:13px">Gender</div>
<div class="sdiv" style="left:1088px;top:254px;width:152px"></div>
<svg style="left:1189px;top:232px" width="17" height="16" viewBox="0 0 17 16"><polyline points="0.6,2.6999999999999997 2.5,4.5 5.8,0.3" fill="none" stroke="#555" stroke-width="1.25"/><line x1="7.3" y1="2.5" x2="16" y2="2.5" stroke="#666" stroke-width="1"/><polyline points="0.6,7.699999999999999 2.5,9.5 5.8,5.3" fill="none" stroke="#555" stroke-width="1.25"/><line x1="7.3" y1="7.5" x2="16" y2="7.5" stroke="#666" stroke-width="1"/><polyline points="0.6,12.700000000000001 2.5,14.5 5.8,10.3" fill="none" stroke="#555" stroke-width="1.25"/><line x1="7.3" y1="12.5" x2="16" y2="12.5" stroke="#666" stroke-width="1"/></svg>
<svg style="left:1220px;top:232px" width="16" height="17" viewBox="0 0 16 17"><polygon points="0.5,1.2 11.5,1.2 7,5.8 7,11.5 5,11.5 5,5.8" fill="#a6a6a6"/><path d="M7.5,9 L15,16 M15,9 L7.5,16" stroke="#a6a6a6" stroke-width="1.3"/></svg>
<div class="btn" style="left:1088.0px;top:259.0px;width:73.5px;height:25.0px">Female</div>
<div class="btn" style="left:1165.3px;top:259.0px;width:73.5px;height:25.0px">Male</div>
<div class="slicer" style="left:34px;top:296px;width:145px;height:272px;"></div>
<div class="stitle" style="left:42px;top:304px;font-size:13px">Hiring Date</div>
<div class="sdiv" style="left:42px;top:323px;width:128px"></div>
<svg style="left:120px;top:301px" width="17" height="16" viewBox="0 0 17 16"><polyline points="0.6,2.6999999999999997 2.5,4.5 5.8,0.3" fill="none" stroke="#555" stroke-width="1.25"/><line x1="7.3" y1="2.5" x2="16" y2="2.5" stroke="#666" stroke-width="1"/><polyline points="0.6,7.699999999999999 2.5,9.5 5.8,5.3" fill="none" stroke="#555" stroke-width="1.25"/><line x1="7.3" y1="7.5" x2="16" y2="7.5" stroke="#666" stroke-width="1"/><polyline points="0.6,12.700000000000001 2.5,14.5 5.8,10.3" fill="none" stroke="#555" stroke-width="1.25"/><line x1="7.3" y1="12.5" x2="16" y2="12.5" stroke="#666" stroke-width="1"/></svg>
<svg style="left:152px;top:302px" width="16" height="17" viewBox="0 0 16 17"><polygon points="0.5,1.2 11.5,1.2 7,5.8 7,11.5 5,11.5 5,5.8" fill="#a6a6a6"/><path d="M7.5,9 L15,16 M15,9 L7.5,16" stroke="#a6a6a6" stroke-width="1.3"/></svg>
<div class="btn" style="left:42.0px;top:328.0px;width:106.0px;height:25.0px">Jan</div>
<div class="btn" style="left:42.0px;top:356.0px;width:106.0px;height:25.0px">Feb</div>
<div class="btn" style="left:42.0px;top:384.0px;width:106.0px;height:25.0px">Mar</div>
<div class="btn" style="left:42.0px;top:412.0px;width:106.0px;height:25.0px">Apr</div>
<div class="btn" style="left:42.0px;top:440.0px;width:106.0px;height:25.0px">May</div>
<div class="btn" style="left:42.0px;top:468.0px;width:106.0px;height:25.0px">Jun</div>
<div class="btn" style="left:42.0px;top:496.0px;width:106.0px;height:25.0px">Jul</div>
<div class="btn" style="left:42.0px;top:524.0px;width:106.0px;height:25.0px">Aug</div>
<div class="btn" style="left:42.0px;top:552.0px;width:106.0px;height:7.0px;border-bottom-left-radius:0;border-bottom-right-radius:0">Sep</div>
<div class="sb" style="left:153px;top:328px;width:17px;height:231px"></div>
<div class="thumb" style="left:154px;top:346px;width:15px;height:110px"></div>
<svg style="left:157.5px;top:334px" width="8" height="6" viewBox="0 0 8 6"><polyline points="0.8,5 4,1.5 7.2,5" fill="none" stroke="#444" stroke-width="1.6"/></svg>
<svg style="left:157.5px;top:547px" width="8" height="6" viewBox="0 0 8 6"><polyline points="0.8,1 4,4.5 7.2,1" fill="none" stroke="#444" stroke-width="1.6"/></svg>
<div class="slicer" style="left:34px;top:570px;width:142px;height:131px;"></div>
<div class="stitle" style="left:43px;top:577px;font-size:13px">Marital S...</div>
<div class="sdiv" style="left:43px;top:597px;width:124px"></div>
<svg style="left:118px;top:576px" width="17" height="16" viewBox="0 0 17 16"><polyline points="0.6,2.6999999999999997 2.5,4.5 5.8,0.3" fill="none" stroke="#555" stroke-width="1.25"/><line x1="7.3" y1="2.5" x2="16" y2="2.5" stroke="#666" stroke-width="1"/><polyline points="0.6,7.699999999999999 2.5,9.5 5.8,5.3" fill="none" stroke="#555" stroke-width="1.25"/><line x1="7.3" y1="7.5" x2="16" y2="7.5" stroke="#666" stroke-width="1"/><polyline points="0.6,12.700000000000001 2.5,14.5 5.8,10.3" fill="none" stroke="#555" stroke-width="1.25"/><line x1="7.3" y1="12.5" x2="16" y2="12.5" stroke="#666" stroke-width="1"/></svg>
<svg style="left:148px;top:577px" width="16" height="17" viewBox="0 0 16 17"><polygon points="0.5,1.2 11.5,1.2 7,5.8 7,11.5 5,11.5 5,5.8" fill="#a6a6a6"/><path d="M7.5,9 L15,16 M15,9 L7.5,16" stroke="#a6a6a6" stroke-width="1.3"/></svg>
<div class="btn" style="left:43.0px;top:602.0px;width:102.0px;height:25.0px">Divorced</div>
<div class="btn" style="left:43.0px;top:630.0px;width:102.0px;height:25.0px">Married</div>
<div class="btn" style="left:43.0px;top:658.0px;width:102.0px;height:22.0px;border-bottom-left-radius:0;border-bottom-right-radius:0">Single</div>
<div class="sb" style="left:150px;top:602px;width:17px;height:78px"></div>
<div class="thumb" style="left:151px;top:620px;width:15px;height:27px"></div>
<svg style="left:154.5px;top:608px" width="8" height="6" viewBox="0 0 8 6"><polyline points="0.8,5 4,1.5 7.2,5" fill="none" stroke="#444" stroke-width="1.6"/></svg>
<svg style="left:154.5px;top:668px" width="8" height="6" viewBox="0 0 8 6"><polyline points="0.8,1 4,4.5 7.2,1" fill="none" stroke="#444" stroke-width="1.6"/></svg>
<div class="slicer" style="left:1116px;top:296px;width:136px;height:176px;"></div>
<div class="stitle" style="left:1124px;top:304px;font-size:13px">City</div>
<div class="sdiv" style="left:1124px;top:323px;width:118px"></div>
<svg style="left:1192px;top:301px" width="17" height="16" viewBox="0 0 17 16"><polyline points="0.6,2.6999999999999997 2.5,4.5 5.8,0.3" fill="none" stroke="#555" stroke-width="1.25"/><line x1="7.3" y1="2.5" x2="16" y2="2.5" stroke="#666" stroke-width="1"/><polyline points="0.6,7.699999999999999 2.5,9.5 5.8,5.3" fill="none" stroke="#555" stroke-width="1.25"/><line x1="7.3" y1="7.5" x2="16" y2="7.5" stroke="#666" stroke-width="1"/><polyline points="0.6,12.700000000000001 2.5,14.5 5.8,10.3" fill="none" stroke="#555" stroke-width="1.25"/><line x1="7.3" y1="12.5" x2="16" y2="12.5" stroke="#666" stroke-width="1"/></svg>
<svg style="left:1224px;top:302px" width="16" height="17" viewBox="0 0 16 17"><polygon points="0.5,1.2 11.5,1.2 7,5.8 7,11.5 5,11.5 5,5.8" fill="#a6a6a6"/><path d="M7.5,9 L15,16 M15,9 L7.5,16" stroke="#a6a6a6" stroke-width="1.3"/></svg>
<div class="btn" style="left:1124.0px;top:328.0px;width:96.0px;height:24.5px">Abu Dhabi</div>
<div class="btn" style="left:1124.0px;top:356.1px;width:96.0px;height:24.5px">Alexandria</div>
<div class="btn" style="left:1124.0px;top:384.2px;width:96.0px;height:24.5px">Amman</div>
<div class="btn" style="left:1124.0px;top:412.3px;width:96.0px;height:24.5px">Aqaba</div>
<div class="btn" style="left:1124.0px;top:440.4px;width:96.0px;height:21.6px;border-bottom-left-radius:0;border-bottom-right-radius:0">Beirut</div>
<div class="sb" style="left:1225px;top:328px;width:17px;height:134px"></div>
<div class="thumb" style="left:1226px;top:346px;width:15px;height:26px"></div>
<svg style="left:1229.5px;top:334px" width="8" height="6" viewBox="0 0 8 6"><polyline points="0.8,5 4,1.5 7.2,5" fill="none" stroke="#444" stroke-width="1.6"/></svg>
<svg style="left:1229.5px;top:450px" width="8" height="6" viewBox="0 0 8 6"><polyline points="0.8,1 4,4.5 7.2,1" fill="none" stroke="#444" stroke-width="1.6"/></svg>
<div class="slicer" style="left:1115px;top:475px;width:139px;height:170px;"></div>
<div class="stitle" style="left:1122px;top:482px;font-size:13px">Country</div>
<div class="sdiv" style="left:1122px;top:501px;width:123px"></div>
<svg style="left:1194px;top:479px" width="17" height="16" viewBox="0 0 17 16"><polyline points="0.6,2.6999999999999997 2.5,4.5 5.8,0.3" fill="none" stroke="#555" stroke-width="1.25"/><line x1="7.3" y1="2.5" x2="16" y2="2.5" stroke="#666" stroke-width="1"/><polyline points="0.6,7.699999999999999 2.5,9.5 5.8,5.3" fill="none" stroke="#555" stroke-width="1.25"/><line x1="7.3" y1="7.5" x2="16" y2="7.5" stroke="#666" stroke-width="1"/><polyline points="0.6,12.700000000000001 2.5,14.5 5.8,10.3" fill="none" stroke="#555" stroke-width="1.25"/><line x1="7.3" y1="12.5" x2="16" y2="12.5" stroke="#666" stroke-width="1"/></svg>
<svg style="left:1226px;top:479px" width="16" height="17" viewBox="0 0 16 17"><polygon points="0.5,1.2 11.5,1.2 7,5.8 7,11.5 5,11.5 5,5.8" fill="#a6a6a6"/><path d="M7.5,9 L15,16 M15,9 L7.5,16" stroke="#a6a6a6" stroke-width="1.3"/></svg>
<div class="btn" style="left:1122.0px;top:506.0px;width:101.0px;height:24.5px">Jordan</div>
<div class="btn" style="left:1122.0px;top:534.0px;width:101.0px;height:24.5px">Lebanon</div>
<div class="btn" style="left:1122.0px;top:562.0px;width:101.0px;height:24.5px">Saudi Arabia</div>
<div class="btn" style="left:1122.0px;top:590.0px;width:101.0px;height:24.5px">UAE</div>
<div class="sb" style="left:1227px;top:506px;width:18px;height:130px"></div>
<div class="thumb" style="left:1228px;top:544px;width:16px;height:73px"></div>
<svg style="left:1232.0px;top:512px" width="8" height="6" viewBox="0 0 8 6"><polyline points="0.8,5 4,1.5 7.2,5" fill="none" stroke="#444" stroke-width="1.6"/></svg>
<svg style="left:1232.0px;top:624px" width="8" height="6" viewBox="0 0 8 6"><polyline points="0.8,1 4,4.5 7.2,1" fill="none" stroke="#444" stroke-width="1.6"/></svg>
<div class="a" style="left:180px;top:295px;width:316px;height:1px;background:#a50021"></div>
<!-- bottom -->
<div id="tabbar" class="a"></div>
<div id="status" class="a"></div>
<div class="a" style="left:249px;top:686px;width:82px;height:25px;background:#fff;border-bottom:2px solid #217346"></div>
<div class="t" style="left:121px;top:693.5px;font-size:12.5px;color:#444;">Rawdata</div>
<div class="t" style="left:196.5px;top:693.5px;font-size:12.5px;color:#444;">Sheet1</div>
<div class="t" style="left:261px;top:693.5px;font-size:12.5px;color:#217346;font-weight:bold;letter-spacing:-0.3px">dach sala</div>
<div class="t" style="left:344px;top:693.5px;font-size:12.5px;color:#444;letter-spacing:0.1px">dash count</div>
<div class="t" style="left:435px;top:693.5px;font-size:12.5px;color:#444;">Tasks</div>
<div class="a" style="left:844px;top:693px;width:509px;height:15px;background:#dcdcdc;border:1px solid #c6c6c6"></div>
<div class="a" style="left:844px;top:693px;width:15px;height:15px;background:#fff;border:1px solid #c6c6c6"></div>
<div class="a" style="left:858px;top:693px;width:436px;height:15px;background:#fff;border:1px solid #c6c6c6"></div>
<div class="a" style="left:1338px;top:693px;width:15px;height:15px;background:#fff;border:1px solid #c6c6c6"></div>
<div class="t" style="left:15px;top:719px;font-size:11.5px;color:#444;">Ready</div>
<div class="a" style="left:1082px;top:715px;width:38px;height:13px;background:#d0d0d0"></div>
<div class="t" style="left:1340px;top:719px;font-size:11.5px;color:#444;">100%</div>
<svg style="left:0;top:0" width="1366" height="728"><polygon points="40.5,702.5 36.5,699.5 40.5,696.5" fill="#b4b4b4"/><polygon points="63.5,696.5 67.5,699.5 63.5,702.5" fill="#b4b4b4"/><rect x="108.5" y="690" width="1" height="20" fill="#a6a6a6"/><rect x="184.5" y="690" width="1" height="20" fill="#a6a6a6"/><rect x="422.5" y="690" width="1" height="20" fill="#a6a6a6"/><rect x="479.5" y="690" width="1" height="20" fill="#a6a6a6"/><circle cx="520.5" cy="699.5" r="7" fill="none" stroke="#6d6d6d" stroke-width="1.2"/><path d="M516.5,699.5 h8 M520.5,695.5 v8" stroke="#6d6d6d" stroke-width="1.3"/><circle cx="828" cy="694.5" r="0.9" fill="#9a9a9a"/><circle cx="828" cy="699" r="0.9" fill="#9a9a9a"/><circle cx="828" cy="703.5" r="0.9" fill="#9a9a9a"/><polygon points="853,697 849,700.5 853,704" fill="#555"/><polygon points="1343,697 1347,700.5 1343,704" fill="#555"/><rect x="1094.5" y="718.5" width="12" height="10" fill="none" stroke="#555"/><path d="M1094,722 h13 M1094,725.5 h13 M1098.5,718 v11 M1102.5,718 v11" stroke="#555" stroke-width="1"/><rect x="1133.5" y="718.5" width="10" height="10" fill="none" stroke="#666"/><path d="M1136,721.5 h5 M1136,724 h5" stroke="#666"/><path d="M1171.5,729 v-10.5 h11 v10.5 M1177,718.5 v6" fill="none" stroke="#666"/><rect x="1200" y="723" width="6" height="1.5" fill="#555"/><rect x="1212" y="723.5" width="98" height="1" fill="#a6a6a6"/><rect x="1260" y="717" width="3" height="11" fill="#555"/><path d="M1314,723.75 h8 M1318,719.75 v8" stroke="#555" stroke-width="1.5"/></svg>
</body></html>
